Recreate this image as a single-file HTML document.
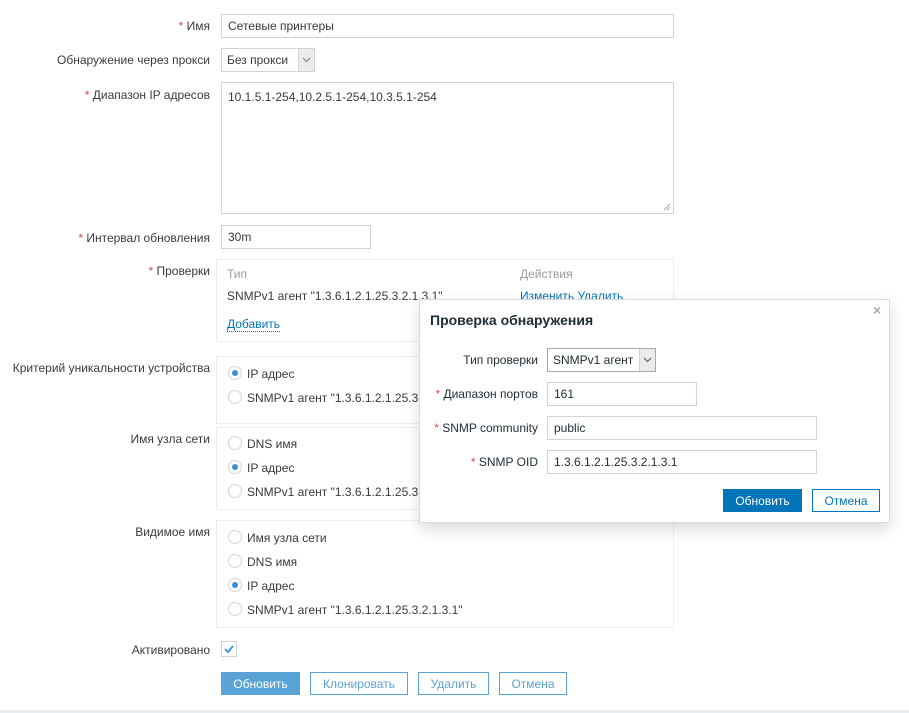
<!DOCTYPE html>
<html><head><meta charset="utf-8"><style>
body{margin:0;width:909px;height:713px;background:#fff;font-family:"Liberation Sans",Arial,sans-serif;font-size:12px;color:#3a3a3a;position:relative;overflow:hidden}
.a{position:absolute}
.lbl{position:absolute;right:699px;white-space:nowrap}
.r{color:#d64e4e}
.inp{position:absolute;border:1px solid #ccd5d9;background:#fff;box-sizing:border-box;padding:0 6px;line-height:22px;white-space:nowrap}
.box{position:absolute;border:1px solid #ebeef0;box-sizing:border-box}
.rad{position:absolute;width:14px;height:14px;border:1px solid #ccd5d9;border-radius:50%;box-sizing:border-box;background:#fff}
.rad.on::after{content:"";position:absolute;left:3px;top:3px;width:6px;height:6px;border-radius:50%;background:#3c8ed1}
.btn{position:absolute;box-sizing:border-box;border:1px solid #0275b8;color:#0275b8;background:#fff;text-align:center;line-height:22px;height:23px}
.arr{position:absolute;top:0;right:0;width:16px;height:100%;background:#ebebeb;border-left:1px solid #ccd5d9;box-sizing:border-box}
.arr svg{position:absolute;left:3px;top:8px}
.m{color:#1f2c33}
</style></head><body>
<div class="lbl" style="top:19px"><span class="r">*</span> Имя</div>
<div class="inp" style="left:221px;top:14px;width:453px;height:24px">Сетевые принтеры</div>
<div class="lbl" style="top:53px">Обнаружение через прокси</div>
<div class="inp" style="left:221px;top:48px;width:94px;height:24px;padding-left:5px">Без прокси<div class="arr"><svg width="9" height="6"><path d="M1 1l3.5 3.5L8 1" stroke="#777" fill="none"/></svg></div></div>
<div class="lbl" style="top:88px"><span class="r">*</span> Диапазон IP адресов</div>
<div class="inp" style="left:221px;top:82px;width:453px;height:132px;line-height:14px;padding-top:7px">10.1.5.1-254,10.2.5.1-254,10.3.5.1-254
<svg class="a" style="right:2px;bottom:2px" width="8" height="8"><path d="M7 1L1 7M7 4L4 7" stroke="#aaa"/></svg></div>
<div class="lbl" style="top:231px"><span class="r">*</span> Интервал обновления</div>
<div class="inp" style="left:221px;top:225px;width:150px;height:24px">30m</div>

<div class="lbl" style="top:264px"><span class="r">*</span> Проверки</div>
<div class="box" style="left:216px;top:259px;width:458px;height:83px"></div>
<div class="a" style="left:227px;top:267px;color:#999">Тип</div>
<div class="a" style="left:520px;top:267px;color:#999">Действия</div>
<div class="a" style="left:227px;top:289px">SNMPv1 агент "1.3.6.1.2.1.25.3.2.1.3.1"</div>
<div class="a" style="left:520px;top:289px;color:#0275b8">Изменить Удалить</div>
<div class="a" style="left:227px;top:317px;color:#0275b8;border-bottom:1px dotted #0275b8">Добавить</div>

<div class="lbl" style="top:361px">Критерий уникальности устройства</div>
<div class="box" style="left:216px;top:356px;width:458px;height:68px"></div>
<div class="rad on" style="left:228px;top:366px"></div><div class="a" style="left:247px;top:367px">IP адрес</div>
<div class="rad" style="left:228px;top:390px"></div><div class="a" style="left:247px;top:391px">SNMPv1 агент "1.3.6.1.2.1.25.3.2.1.3.1"</div>

<div class="lbl" style="top:432px">Имя узла сети</div>
<div class="box" style="left:216px;top:427px;width:458px;height:83px"></div>
<div class="rad" style="left:228px;top:436px"></div><div class="a" style="left:247px;top:437px">DNS имя</div>
<div class="rad on" style="left:228px;top:460px"></div><div class="a" style="left:247px;top:461px">IP адрес</div>
<div class="rad" style="left:228px;top:484px"></div><div class="a" style="left:247px;top:485px">SNMPv1 агент "1.3.6.1.2.1.25.3.2.1.3.1"</div>

<div class="lbl" style="top:525px">Видимое имя</div>
<div class="box" style="left:216px;top:520px;width:458px;height:108px"></div>
<div class="rad" style="left:228px;top:530px"></div><div class="a" style="left:247px;top:531px">Имя узла сети</div>
<div class="rad" style="left:228px;top:554px"></div><div class="a" style="left:247px;top:555px">DNS имя</div>
<div class="rad on" style="left:228px;top:578px"></div><div class="a" style="left:247px;top:579px">IP адрес</div>
<div class="rad" style="left:228px;top:602px"></div><div class="a" style="left:247px;top:603px">SNMPv1 агент "1.3.6.1.2.1.25.3.2.1.3.1"</div>

<div class="lbl" style="top:643px">Активировано</div>
<div class="a" style="left:221px;top:641px;width:16px;height:16px;border:1px solid #ccd5d9;box-sizing:border-box"><svg width="14" height="14"><path d="M3 7l3 3 5-6" stroke="#3c8ed1" stroke-width="1.8" fill="none"/></svg></div>

<div class="btn" style="left:221px;top:672px;width:79px;background:#5aa3d6;border-color:#5aa3d6;color:#fff">Обновить</div>
<div class="btn" style="left:310px;top:672px;width:98px;border-color:#5aa3d6;color:#5aa3d6">Клонировать</div>
<div class="btn" style="left:418px;top:672px;width:71px;border-color:#5aa3d6;color:#5aa3d6">Удалить</div>
<div class="btn" style="left:499px;top:672px;width:68px;border-color:#5aa3d6;color:#5aa3d6">Отмена</div>
<div class="a" style="left:0;top:710px;width:909px;height:3px;background:#ebeef0"></div>

<div class="a" style="left:419px;top:299px;width:471px;height:224px;background:#fff;border:1px solid #d6dde0;box-sizing:border-box;box-shadow:0 6px 14px rgba(0,0,0,.15)"></div>
<div class="a m" style="left:430px;top:312px;font-size:14px;font-weight:bold">Проверка обнаружения</div>
<div class="a" style="left:873px;top:302px;color:#aaa;font-size:14px;font-weight:bold">×</div>
<div class="a m" style="right:371px;top:353px">Тип проверки</div>
<div class="inp m" style="left:547px;top:348px;width:109px;height:24px;padding-left:5px;border-color:#aaa">SNMPv1 агент<div class="arr"><svg width="9" height="6"><path d="M1 1l3.5 3.5L8 1" stroke="#555" fill="none"/></svg></div></div>
<div class="a m" style="right:371px;top:387px"><span class="r">*</span> Диапазон портов</div>
<div class="inp m" style="left:547px;top:382px;width:150px;height:24px">161</div>
<div class="a m" style="right:371px;top:421px"><span class="r">*</span> SNMP community</div>
<div class="inp m" style="left:547px;top:416px;width:270px;height:24px">public</div>
<div class="a m" style="right:371px;top:455px"><span class="r">*</span> SNMP OID</div>
<div class="inp m" style="left:547px;top:450px;width:270px;height:24px">1.3.6.1.2.1.25.3.2.1.3.1</div>
<div class="btn" style="left:723px;top:489px;width:79px;background:#0275b8;color:#fff">Обновить</div>
<div class="btn" style="left:812px;top:489px;width:68px">Отмена</div>
</body></html>
